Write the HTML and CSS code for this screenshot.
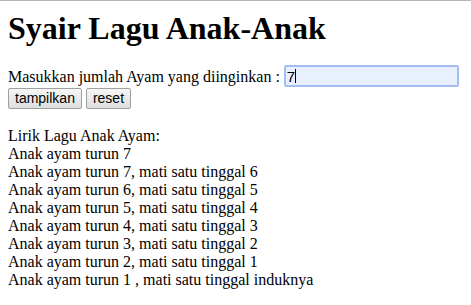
FILE: index.html
```html
<!DOCTYPE html>
<html lang="en">

<head>
    <meta charset="UTF-8">
    <title>Syair Lagu Anak-Anak</title>
    <link rel="stylesheet" href="styles.css">
</head>

<body>
    <h1 class="title">Syair Lagu Anak-Anak</h1>

    <form class="form-ayam">
        <div class="input-row">
            Masukkan jumlah Ayam yang diinginkan :
            <span class="input-wrap">
                <input class="input-jumlah" type="text" name="jumlah" value="7">
                <span class="caret"></span>
            </span>
        </div>
        <div class="buttons">
            <button type="button" class="btn">tampilkan</button>
            <button type="reset" class="btn">reset</button>
        </div>
    </form>

    <div class="lirik">
        Lirik Lagu Anak Ayam:<br>
        Anak ayam turun 7<br>
        Anak ayam turun 7, mati satu tinggal 6<br>
        Anak ayam turun 6, mati satu tinggal 5<br>
        Anak ayam turun 5, mati satu tinggal 4<br>
        Anak ayam turun 4, mati satu tinggal 3<br>
        Anak ayam turun 3, mati satu tinggal 2<br>
        Anak ayam turun 2, mati satu tinggal 1<br>
        Anak ayam turun 1 , mati satu tinggal induknya
    </div>
</body>

</html>
```

FILE: styles.css
```css
html {
    border-top: 1px solid #b4b4b4;
}

body {
    font-family: "Liberation Serif", "Times New Roman", serif;
    font-size: 16px;
    margin: 0;
    padding: 9px 8px 8px;
    color: #000;
}

.title {
    font-size: 32px;
    margin: 0 0 18px;
    line-height: 37px;
}

.input-row {
    line-height: 22px;
}

.input-wrap {
    position: relative;
    display: inline-block;
}

.input-jumlah {
    width: 169px;
    height: 18px;
    padding: 0 1px;
    border: 2px solid #a3bff0;
    border-radius: 2px;
    background: #e8f0fe;
    font-family: "Liberation Sans", Arial, sans-serif;
    font-size: 15px;
    color: #000;
    outline: none;
}

.caret {
    position: absolute;
    left: 11px;
    top: 4px;
    width: 1px;
    height: 14px;
    background: #000;
}

.buttons {
    display: flex;
    gap: 4px;
}

.btn {
    font-family: "Liberation Sans", Arial, sans-serif;
    font-size: 14px;
    padding: 1px 6px;
    height: 21px;
    border: 1px solid #a0a0a0;
    border-radius: 2px;
    background: linear-gradient(#f6f6f6, #dedede);
    color: #000;
}

.lirik {
    margin-top: 18px;
    line-height: 18px;
}
```
